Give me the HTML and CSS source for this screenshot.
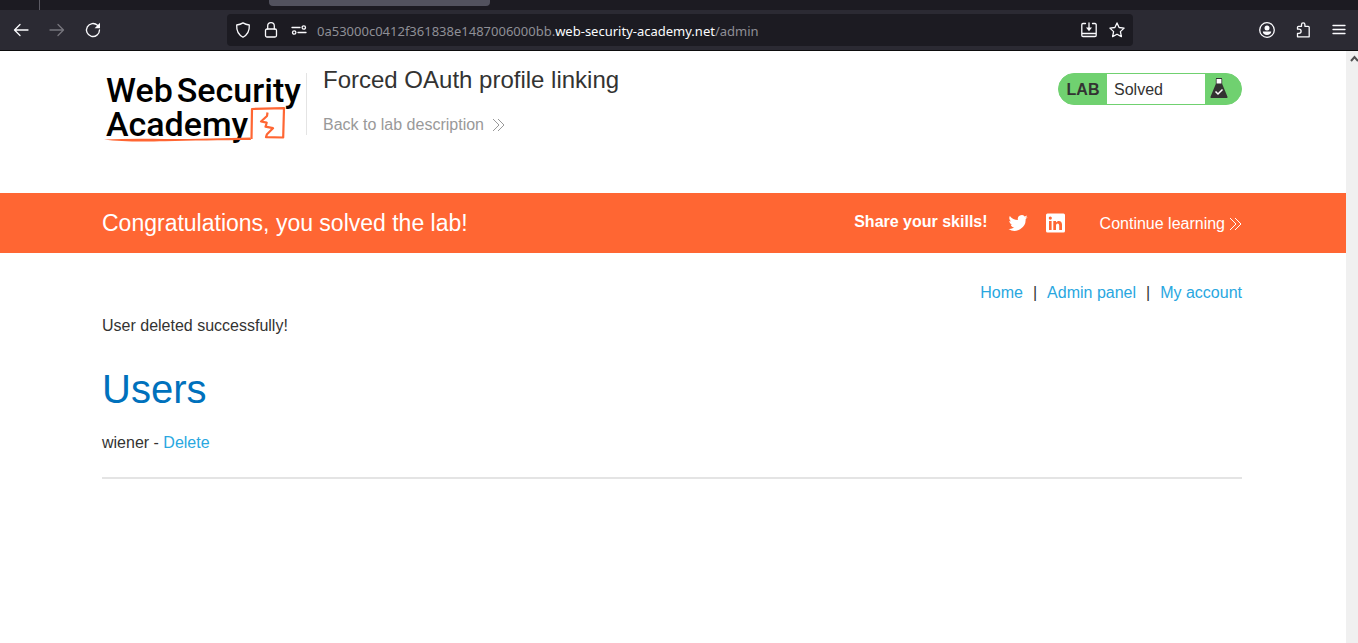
FILE: index.html
```html
<!DOCTYPE html>
<html lang="en">
<head>
<meta charset="utf-8">
<title>Forced OAuth profile linking</title>
<link rel="stylesheet" href="styles.css">
</head>
<body>
<div class="browser">
  <div class="tabstrip"><span class="tab-divider"></span><span class="tab-active"></span></div>
  <div class="toolbar">
    <nav class="tools" aria-label="Browser navigation">
      <button class="tool" aria-label="Back"><svg width="16" height="16" viewBox="0 0 16 16"><path d="M15 8H2M7 2.5 1.5 8 7 13.500"/></svg></button>
      <button class="tool tool-off" aria-label="Forward" disabled><svg width="16" height="16" viewBox="0 0 16 16"><path d="M1 8h13M9 2.500 14.500 8 9 13.500"/></svg></button>
      <button class="tool" aria-label="Reload"><svg width="16" height="16" viewBox="0 0 16 16"><path d="M12.500 3.300A6.500 6.500 0 1 0 14.500 8"/><path class="solid" d="M15 .8v5.400H9.600z"/></svg></button>
    </nav>
    <div class="address">
      <button class="mini" aria-label="Tracking protection"><svg width="16" height="16" viewBox="0 0 16 16"><path d="M8 .9c2 1.300 4.200 1.900 6.300 2.100.3 5-1.500 9.600-6.300 12.200C3.200 12.600 1.400 8 1.700 3 3.800 2.800 6 2.200 8 .9z"/></svg></button>
      <button class="mini" aria-label="Connection secure"><svg width="16" height="16" viewBox="0 0 16 16"><rect x="2.500" y="7" width="11" height="8" rx="1.500"/><path d="M4.700 7V4a3.300 3.300 0 0 1 6.600 0v3"/></svg></button>
      <button class="mini" aria-label="Permissions"><svg width="16" height="16" viewBox="0 0 16 16"><path d="M1 5.500h8M7 10.500h8"/><circle cx="12.800" cy="5.500" r="1.700"/><circle cx="3.200" cy="10.500" r="1.700"/></svg></button>
      <div class="url" role="textbox" aria-label="Address" contenteditable="true" spellcheck="false">0a53000c0412f361838e1487006000bb.<span class="domain">web-security-academy.net</span>/admin</div>
      <button class="mini" aria-label="Install"><svg width="16" height="16" viewBox="0 0 16 16"><path d="M4.500 1.500H2A1.200 1.200 0 0 0 .8 2.700v10.600a1.200 1.200 0 0 0 1.200 1.200h12a1.200 1.200 0 0 0 1.200-1.200V2.700A1.200 1.200 0 0 0 14 1.500h-2.500M1 11.500h14M8 .8V7"/><path class="solid" d="M5 5.500h6L8 9.200z"/></svg></button>
      <button class="mini" aria-label="Bookmark"><svg width="16" height="16" viewBox="0 0 16 16"><path d="m8 .9 2.100 4.600 5 .6-3.700 3.500 1 5L8 12.200l-4.400 2.400 1-5L.9 6.100l5-.6z"/></svg></button>
    </div>
    <div class="tools">
      <button class="tool" aria-label="Account"><svg width="16" height="16" viewBox="0 0 16 16"><circle cx="8" cy="8" r="7.300"/><circle class="solid" cx="8" cy="6" r="2.500"/><path class="solid" d="M3.800 9.600h8.400c0 2-1.800 3.400-4.200 3.400s-4.200-1.400-4.200-3.400z"/></svg></button>
      <button class="tool" aria-label="Extensions"><svg width="16" height="16" viewBox="0 0 16 16"><path d="M2.500 7.200V5.300a1 1 0 0 1 1-1h3V2.500a1.700 1.700 0 0 1 3.400 0v1.800h3.300a1 1 0 0 1 1 1v9.500H2.500v-3.400H4a1.700 1.700 0 0 0 0-4.200z"/></svg></button>
      <button class="tool" aria-label="Menu"><svg width="16" height="16" viewBox="0 0 16 16"><path d="M2 3.500h12M2 7.500h12M2 11.500h12"/></svg></button>
    </div>
  </div>
</div>
<div class="viewport">
  <div class="page">
    <header class="wrap header">
      <a class="logo" href="#" aria-label="Web Security Academy">
        <span class="logo-line"><span>Web</span><span>Security</span></span>
        <span class="logo-line">Academy</span>
        <svg class="logo-mark" width="184" height="38" viewBox="0 0 184 38"><path class="line" d="M0 33.500c20-.8 40-.7 60-.5s60-.6 86.500-1.500l.5 2.600c-30 .3-60 .5-86 1.200-20 .3-45 .7-61-1.800z"/><path class="frame" d="M147.500 33 148 3l32-.8-.8 29.300-17.200-.3 1-3 6-6-7.500-1.500 1.200-4-5.700-1.200 6-5.500.5-3.500"/></svg>
      </a>
      <div class="heading">
        <h2 class="title">Forced OAuth profile linking</h2>
        <a class="back" href="#">Back to lab description<svg class="chevrons" width="13" height="12" viewBox="0 0 13 12"><path d="m1 0 6 6-6 6M6 0l6 6-6 6"/></svg></a>
      </div>
      <div class="status">
        <strong class="status-tag">LAB</strong>
        <span class="status-text">Solved</span>
        <svg class="flask" width="18" height="22" viewBox="0 0 18 22"><path class="neck" d="M6 1h6v6H6z"/><path class="glass" d="M6 0h6v1H6zM5.800 1h.8v4.500h4.800V1h.8v5l5.200 12.500c.4 1-.1 1.500-1 1.500H1.600c-.9 0-1.400-.5-1-1.500L5.800 6z"/><path class="tick" d="m5.500 13.500 2.500 2.500 4.500-4.500"/></svg>
      </div>
    </header>
    <section class="banner">
      <div class="wrap banner-row">
        <h3 class="congrats">Congratulations, you solved the lab!</h3>
        <strong class="share">Share your skills!</strong>
        <div class="social">
          <a href="#" aria-label="Twitter"><svg width="20" height="20" viewBox="0 0 24 24"><path d="M23.600 4.900c-.8.400-1.700.6-2.700.7 1-.6 1.700-1.500 2.100-2.600-.9.500-1.900.9-3 1.100a4.700 4.700 0 0 0-8.100 4.300C8 8.200 4.500 6.400 2.200 3.500c-1.300 2.200-.6 5 1.500 6.300-.8 0-1.500-.2-2.200-.6 0 2.300 1.600 4.300 3.800 4.700-.7.200-1.400.2-2.100.1.600 1.900 2.300 3.200 4.400 3.200A9.500 9.500 0 0 1 .6 19.200 13.400 13.400 0 0 0 21.200 7.300c1-.7 1.800-1.500 2.400-2.400z"/></svg></a>
          <a href="#" aria-label="LinkedIn"><svg width="20" height="20" viewBox="0 0 20 20"><path fill-rule="evenodd" d="M1.500.5h16A1.500 1.500 0 0 1 19 2v16a1.500 1.500 0 0 1-1.500 1.500h-16A1.500 1.500 0 0 1 0 18V2A1.500 1.500 0 0 1 1.500.5zM3 8v9h2.600V8zM4.300 3.500a1.600 1.600 0 1 0 0 3.200 1.600 1.600 0 0 0 0-3.200zM7.300 8v9H10v-4.500c0-2.800 3.200-2.800 3.200 0V17H16v-5.500c0-4.200-4.300-4.500-6-2V8z"/></svg></a>
        </div>
        <a class="continue" href="#">Continue learning<svg class="chevrons" width="13" height="12" viewBox="0 0 13 12"><path d="m1 0 6 6-6 6M6 0l6 6-6 6"/></svg></a>
      </div>
    </section>
    <main class="wrap content">
      <nav class="links" aria-label="Account">
        <a href="#">Home</a><span>|</span><a href="#">Admin panel</a><span>|</span><a href="#">My account</a>
      </nav>
      <p class="notice">User deleted successfully!</p>
      <h1 class="users">Users</h1>
      <p class="user">wiener - <a href="#">Delete</a></p>
      <hr class="rule">
    </main>
  </div>
  <div class="scrollbar" aria-hidden="true"><svg width="8" height="8" viewBox="0 0 8 8"><path d="m1 6 3.500-4L8 6"/></svg></div>
</div>
</body>
</html>
```
FILE: styles.css
```css
* { box-sizing: border-box; }
body {
  margin: 0;
  min-height: 100vh;
  display: flex;
  flex-direction: column;
  background: #fff;
  color: #333332;
  font: 16px/20px "Liberation Sans", Arial, sans-serif;
}
h1, h2, h3, p { margin: 0; font-weight: 400; }
a { color: #29a7df; text-decoration: none; }
button { padding: 0; border: 0; background: none; color: inherit; }
svg { display: block; flex: none; }

.browser { color: #fbfbfe; border-bottom: 1px solid #0c0c0d; }
.browser svg { fill: none; stroke: currentColor; stroke-width: 1.3; stroke-linejoin: round; stroke-linecap: round; }
.browser .solid { fill: currentColor; stroke: none; }
.tabstrip { display: flex; height: 10px; background: #1c1b22; }
.tab-divider { width: 40px; border-right: 1px solid #5b5a63; }
.tab-active { width: 221px; height: 6px; margin-left: 229px; border-radius: 0 0 4px 4px; background: #52525e; }
.toolbar { display: flex; align-items: center; gap: 116px; height: 40px; padding: 0 1px 0 3px; background: #2b2a33; }
.tools { display: flex; }
.tool { display: flex; align-items: center; justify-content: center; width: 36px; height: 32px; }
.tool-off { color: #76757d; }
.address { flex: 1; display: flex; align-items: center; gap: 12px; height: 32px; padding: 0 8px; border-radius: 4px; background: #1c1b22; }
.url { flex: 1; color: #8f8f96; font: 13px/20px "Noto Sans", "Open Sans", sans-serif; white-space: nowrap; outline: 0; padding-top: 1px; margin-left: -2px; }
.domain { color: #fbfbfe; }

.viewport { flex: 1; display: flex; }
.page { flex: 1; }
.scrollbar { width: 12px; padding: 4px 0 0 4px; background: #f0f0f0; }
.scrollbar svg { fill: none; stroke: #505050; stroke-width: 2; }
.wrap { padding: 0 104px 0 102px; }

.header { display: flex; align-items: flex-start; height: 142px; padding-top: 22px; }
.logo { position: relative; width: 205px; height: 62px; padding-left: 4px; border-right: 1px solid #e4e4e4; color: #000; font: 500 34px/34px Roboto, sans-serif; }
.logo-line { display: flex; gap: 4px; }
.logo-mark { position: absolute; left: 2px; top: 33px; }
.line { fill: #ff6633; }
.frame { fill: none; stroke: #ff6633; stroke-width: 2.2; stroke-linejoin: round; }
.heading { flex: 1; padding-left: 16px; margin-top: -7px; }
.title { font-size: 24px; line-height: 28px; }
.back { display: flex; align-items: center; gap: 8px; margin-top: 21px; color: #999; }
.chevrons { fill: none; stroke: currentColor; stroke-width: 1; }
.status { display: flex; align-items: center; width: 184px; height: 32px; border: 1px solid #70d170; border-radius: 16px; background: #70d170; overflow: hidden; }
.status-tag { width: 48px; text-align: center; padding-top: 2px; }
.status-text { width: 98px; padding: 6px 7px 4px; background: #fff; }
.flask { margin-left: 5px; }
.neck { fill: #fff; }
.glass { fill: #333332; }
.tick { fill: none; stroke: #fff; stroke-width: 1.5; }

.banner { background: #ff6633; color: #fff; }
.banner-row { display: flex; align-items: center; height: 60px; }
.congrats { flex: 1; font-size: 23px; line-height: 28px; }
.share { padding-bottom: 2px; }
.social { display: flex; gap: 18px; margin: 0 34px 0 20px; }
.social svg { fill: #fff; }
.continue { display: flex; align-items: center; gap: 4px; padding-top: 2px; color: #fff; }

.content { padding-top: 30px; }
.links { display: flex; justify-content: flex-end; gap: 10px; }
.notice { margin-top: 13px; }
.users { margin-top: 29px; color: #0071bc; font-size: 40px; line-height: 48px; }
.user { margin-top: 20px; }
.rule { height: 2px; margin: 24px 0 0; border: 0; background: #e4e4e4; }
```
